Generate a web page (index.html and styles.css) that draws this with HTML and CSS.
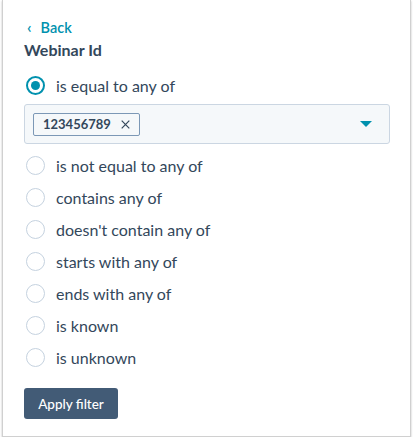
FILE: index.html
```html
<!DOCTYPE html>
<html>
<head>
<meta charset="utf-8">
<link rel="stylesheet" href="styles.css">
</head>
<body>
<div class="panel">
  <a class="back" href="#"><span class="chev">&#8249;</span>Back</a>
  <div class="title">Webinar Id</div>
  <div class="options">
    <label class="opt checked"><span class="radio"></span><span>is equal to any of</span></label>
    <div class="select">
      <span class="tag">123456789<svg class="x" width="9" height="9" viewBox="0 0 9 9"><path d="M0.7 0.7L8.3 8.3M8.3 0.7L0.7 8.3" stroke="#33475b" stroke-width="1.2"/></svg></span>
      <svg class="caret" width="12" height="6" viewBox="0 0 12 6"><path d="M0 0H12L6 6Z" fill="#0091ae"/></svg>
    </div>
    <label class="opt"><span class="radio"></span><span>is not equal to any of</span></label>
    <label class="opt"><span class="radio"></span><span>contains any of</span></label>
    <label class="opt"><span class="radio"></span><span>doesn't contain any of</span></label>
    <label class="opt"><span class="radio"></span><span>starts with any of</span></label>
    <label class="opt"><span class="radio"></span><span>ends with any of</span></label>
    <label class="opt"><span class="radio"></span><span>is known</span></label>
    <label class="opt"><span class="radio"></span><span>is unknown</span></label>
  </div>
  <button class="apply">Apply filter</button>
</div>
</body>
</html>
```
FILE: styles.css
```css
html, body { margin: 0; padding: 0; background: #fff; }
body { font-family: Lato, "Open Sans", sans-serif; color: #33475b; }
.panel {
  box-sizing: border-box;
  margin-left: 2px;
  width: 409px;
  height: 437px;
  border: 1px solid #d0d0d0;
  border-top: none;
  box-shadow: 0 1px 2px rgba(0,0,0,0.25);
  padding: 19px 21px 0 21px;
  display: flex;
  flex-direction: column;
}
.back {
  color: #0091ae;
  text-decoration: none;
  font-size: 14.5px;
  font-weight: 600;
  line-height: 18px;
  display: flex;
  align-items: center;
}
.chev { font-size: 16px; margin: 0 9px 0 3px; line-height: 18px; position: relative; top: -1px; }
.title {
  font-size: 16px;
  font-weight: 700;
  line-height: 20px;
  margin-top: 3px;
}
.options { display: flex; flex-direction: column; margin-top: 9px; }
.opt {
  display: flex;
  align-items: center;
  height: 32px;
  font-size: 16px;
  gap: 11px;
}
.radio {
  box-sizing: border-box;
  width: 19px;
  height: 19px;
  border: 1.5px solid #c5d2df;
  border-radius: 50%;
  margin-left: 2px;
  display: flex;
  align-items: center;
  justify-content: center;
}
.checked .radio { border: 2px solid #0091ae; }
.checked .radio::after {
  content: "";
  width: 9px;
  height: 9px;
  border-radius: 50%;
  background: #0091ae;
}
.select {
  box-sizing: border-box;
  height: 40px;
  margin: 3px 0 5px 0;
  width: 366px;
  background: #f5f8fa;
  border: 1px solid #cbd6e2;
  border-radius: 3px;
  display: flex;
  align-items: center;
  justify-content: space-between;
  padding: 0 17px 0 8px;
}
.tag {
  box-sizing: border-box;
  height: 23px;
  border: 1px solid #7c98b6;
  border-radius: 2px;
  display: flex;
  align-items: center;
  gap: 10px;
  padding: 0 9px 0 9px;
  font-size: 13px;
  font-weight: 700;
}
.apply {
  align-self: flex-start;
  margin-top: 15px;
  width: 94px;
  height: 31px;
  background: #425b76;
  color: #fff;
  border: none;
  border-radius: 3px;
  font-family: Lato, sans-serif;
  font-size: 13.5px;
  font-weight: 500;
}
```
